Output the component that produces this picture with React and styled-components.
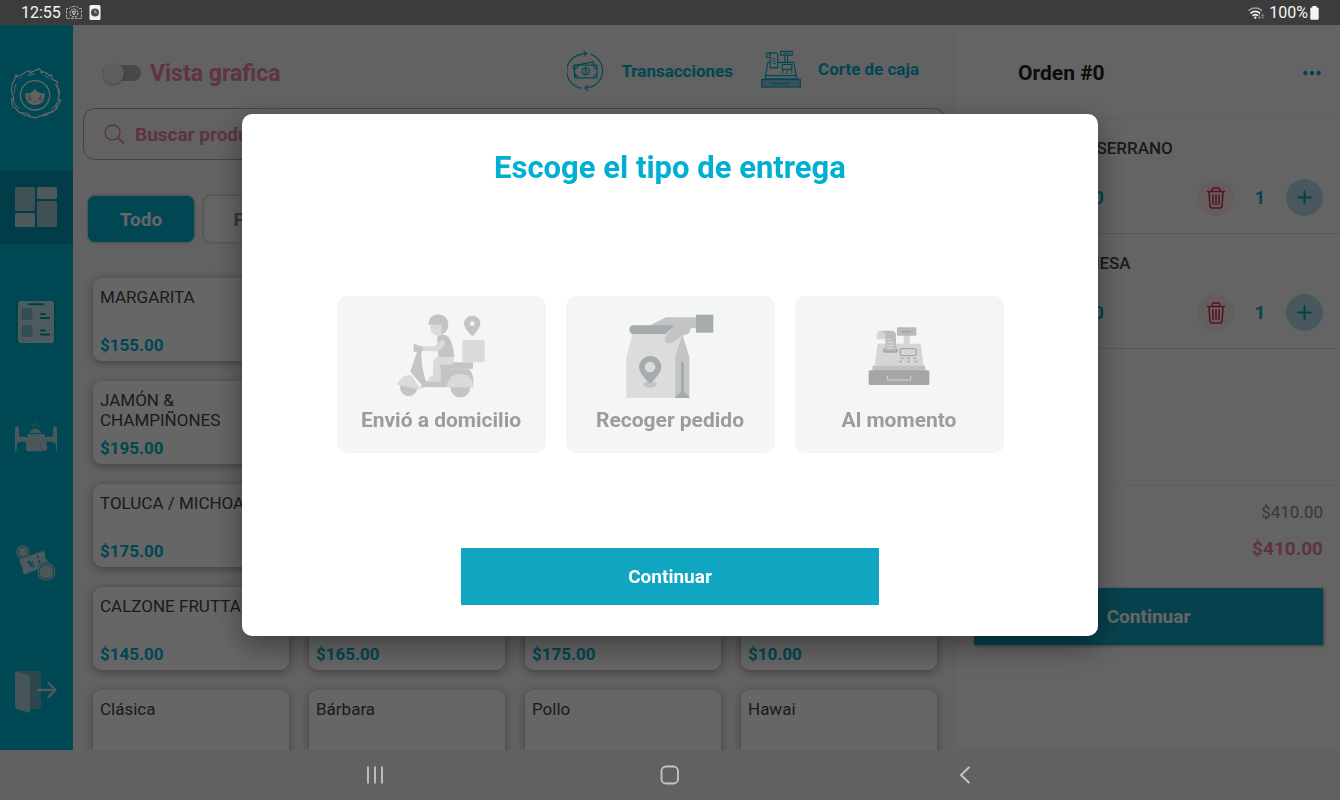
import React, { useState } from 'react';
import styled, { createGlobalStyle } from 'styled-components';

const GlobalStyle = createGlobalStyle`
  * {
    box-sizing: border-box;
  }

  body {
    margin: 0;
    font-family: Roboto, 'Liberation Sans', sans-serif;
    color: #444;
    background: #616161;
  }

  button,
  input {
    font: inherit;
    color: inherit;
    border: 0;
    padding: 0;
    margin: 0;
    background: none;
  }

  button {
    cursor: pointer;
  }

  svg {
    display: block;
    flex: none;
  }

  h1, h2, h3, p, ul {
    margin: 0;
    padding: 0;
    list-style: none;
  }
`;

// Screen
const Screen = styled.div`
  display: flex;
  flex-direction: column;
  height: 100vh;
  overflow: hidden;
`;

const StatusBar = styled.div`
  position: relative;
  z-index: 2;
  flex: none;
  display: flex;
  align-items: center;
  gap: 5px;
  height: 25px;
  padding: 0 21px;
  background: #3c3c3c;
  color: #f4f4f4;
  font-size: 16px;
  line-height: 24px;
`;

const StatusIcons = styled.div`
  display: flex;
  align-items: center;
  gap: 7px;
`;

const StatusRight = styled.div`
  display: flex;
  align-items: center;
  gap: ${({ $tight }) => ($tight ? '2px' : '4px')};
  margin-left: auto;
`;

const Body = styled.div`
  flex: 1;
  display: flex;
  min-height: 0;
`;

const NavBar = styled.nav`
  flex: none;
  display: grid;
  grid-template-columns: repeat(3, 22%);
  justify-content: center;
  justify-items: center;
  height: 50px;
  background: #616161;
`;

const NavKey = styled.button`
  display: flex;
  align-items: center;
  justify-content: center;
  width: 48px;
  color: #c6c6c6;
`;

// Sidebar
const Sidebar = styled.aside`
  flex: none;
  display: flex;
  flex-direction: column;
  width: 73px;
  padding-bottom: 21px;
  background: #00b4d2;
`;

const Logo = styled.div`
  display: flex;
  justify-content: center;
  height: 146px;
  padding: 42px 1px 0 0;
`;

const SideGroup = styled.div`
  display: flex;
  flex-direction: column;
  gap: ${({ $bottom }) => ($bottom ? '56px' : '42px')};
  margin-top: ${({ $bottom }) => ($bottom ? 'auto' : '0')};
`;

const SideButton = styled.button`
  display: flex;
  align-items: center;
  justify-content: center;
  height: 73px;
  padding: 0 1px 1px 0;
  background: ${({ $active }) => ($active ? '#0099b3' : 'transparent')};
`;

// Catalogue
const Main = styled.main`
  flex: 1;
  min-width: 0;
  background: #f4f4f4;
`;

const TopBar = styled.header`
  display: flex;
  align-items: flex-start;
  justify-content: space-between;
  height: 83px;
  padding: 25px 38px 0 30px;
`;

const ToggleLabel = styled.label`
  display: flex;
  align-items: center;
  gap: 9px;
  height: 46px;
  font-size: 23px;
  font-weight: 700;
  color: #ee7fab;
`;

const Toggle = styled.input`
  appearance: none;
  display: flex;
  align-items: center;
  width: 38px;
  height: 16px;
  border-radius: 8px;
  background: #b4b4b4;

  &::before {
    content: '';
    flex: none;
    width: 21px;
    height: 21px;
    border-radius: 50%;
    background: #ececec;
    box-shadow: 0 1px 2px rgba(0, 0, 0, 0.3);
  }

  &:checked {
    justify-content: flex-end;
  }
`;

const TopLinks = styled.div`
  display: flex;
  align-items: flex-start;
  gap: 28px;
`;

const TopLink = styled.a`
  display: flex;
  align-items: center;
  gap: 17px;
  color: #00b0cf;
  font-size: 17px;
  font-weight: 700;
  text-decoration: none;
`;

const SearchBox = styled.label`
  display: flex;
  align-items: center;
  gap: 10px;
  height: 52px;
  margin: 0 11px 0 10px;
  padding: 0 20px;
  border: 1px solid #a8a8a8;
  border-radius: 12px;
  color: #ee7fab;
`;

const SearchInput = styled.input`
  flex: 1;
  min-width: 0;
  font-size: 19px;
  font-weight: 700;

  &::placeholder {
    color: #ee7fab;
    opacity: 1;
  }
`;

const Chips = styled.div`
  display: flex;
  gap: 10px;
  padding: 36px 15px;
`;

const Chip = styled.button`
  width: 106px;
  height: 46px;
  border-radius: 7px;
  background: ${({ $active }) => ($active ? '#00b0cf' : '#fbfbfb')};
  color: ${({ $active }) => ($active ? '#fff' : '#8a8a8a')};
  box-shadow: 0 0 3px rgba(0, 0, 0, 0.4);
  font-size: 19px;
  font-weight: 700;
`;

const ProductGrid = styled.div`
  display: grid;
  grid-template-columns: repeat(4, 1fr);
  gap: 20px;
  padding: 0 20px;
`;

const ProductCard = styled.button`
  display: flex;
  flex-direction: column;
  justify-content: space-between;
  height: 83px;
  padding: 9px 7px 6px;
  border-radius: 9px;
  background: #fff;
  box-shadow: 0 2px 10px rgba(0, 0, 0, 0.35);
  text-align: left;
`;

const ProductName = styled.span`
  font-size: 17px;
  line-height: 20px;
`;

const ProductPrice = styled.span`
  font-size: 17px;
  line-height: 20px;
  font-weight: 700;
  color: #00b0cf;
`;

// Order
const OrderPanel = styled.section`
  flex: none;
  display: flex;
  flex-direction: column;
  width: 383px;
  background: #f9f9f9;
`;

const OrderHeader = styled.header`
  display: flex;
  align-items: center;
  justify-content: space-between;
  height: 94px;
  padding: 3px 18px 0 61px;
  border-bottom: 2px solid #f2f2f2;
`;

const OrderTitle = styled.h2`
  font-size: 21px;
  font-weight: 700;
  color: #222;
`;

const MoreButton = styled.button`
  color: #00b0cf;
`;

const OrderList = styled.ul`
  flex: 1;
`;

const OrderItem = styled.li`
  height: 115px;
  padding: 18px 17px 0 76px;
  border-bottom: 1px solid #dcdcdc;
`;

const ItemName = styled.h3`
  font-size: 17px;
  line-height: 22px;
  font-weight: 500;
`;

const ItemRow = styled.div`
  display: flex;
  align-items: center;
  gap: 19px;
  padding-top: 20px;
`;

const ItemPrice = styled.span`
  flex: 1;
  font-size: 19px;
  font-weight: 700;
  color: #00b0cf;
`;

const Quantity = styled.span`
  width: 14px;
  text-align: center;
  font-size: 19px;
  font-weight: 700;
  color: #00b0cf;
`;

const RoundButton = styled.button`
  display: flex;
  align-items: center;
  justify-content: center;
  width: 37px;
  height: 37px;
  border-radius: 50%;
  background: ${({ $danger }) => ($danger ? '#f9ebee' : '#b4dcea')};
  color: ${({ $danger }) => ($danger ? '#e0284f' : '#00a3c4')};
`;

const Totals = styled.div`
  display: flex;
  flex-direction: column;
  align-items: flex-end;
  gap: 14px;
  padding: 15px 17px 27px;
  border-top: 2px solid #f1f1f1;
`;

const Subtotal = styled.p`
  font-size: 17px;
  line-height: 22px;
  color: #8c8c8c;
`;

const Total = styled.p`
  font-size: 19px;
  line-height: 24px;
  font-weight: 700;
  color: #ee7fab;
`;

const PrimaryButton = styled.button`
  height: 57px;
  background: #10a5c1;
  color: #fff;
  font-size: 19px;
  font-weight: 700;
`;

const OrderButton = styled(PrimaryButton)`
  flex: none;
  margin: 0 17px 105px;
  box-shadow: 1px 1px 3px rgba(0, 0, 0, 0.4);
`;

// Modal
const Overlay = styled.div`
  position: fixed;
  inset: 0 0 50px;
  z-index: 1;
  display: flex;
  align-items: center;
  justify-content: center;
  background: rgba(0, 0, 0, 0.6);
`;

const Modal = styled.div`
  display: flex;
  flex-direction: column;
  align-items: center;
  width: min(856px, 92%);
  padding: 34px 24px 31px;
  border-radius: 10px;
  background: #fff;
  box-shadow: 0 10px 30px rgba(0, 0, 0, 0.4);
`;

const ModalTitle = styled.h1`
  font-size: 31px;
  line-height: 40px;
  font-weight: 700;
  color: #00b0d2;
`;

const Options = styled.div`
  display: flex;
  gap: 20px;
  padding: 108px 0 95px;
`;

const Option = styled.button`
  display: flex;
  flex-direction: column;
  align-items: center;
  gap: 10px;
  width: 209px;
  padding: 18px 0 21px;
  border-radius: 10px;
  background: #f4f6f6;
  color: #9c9c9c;
  font-size: 21px;
  line-height: 24px;
  font-weight: 700;
`;

const ModalButton = styled(PrimaryButton)`
  width: 418px;
  max-width: 100%;
`;

// Icons
const CameraIcon = () => (
  <svg width="16" height="13" viewBox="0 0 16 13" fill="none" stroke="#b8b8b8" strokeWidth=".9">
    <path d="M.5 4V2.500h3L5 .6h6l1.500 1.900h3v9.900H.5z" strokeDasharray="3 1" />
    <circle cx="8" cy="7" r="4" stroke="#e4e4e4" strokeDasharray="2 1" />
    <path d="M6.200 5.500q1.800-1 3.600 0L8 9z" stroke="#e4e4e4" />
  </svg>
);

const ClockPageIcon = () => (
  <svg width="12" height="15" viewBox="0 0 12 15">
    <rect x=".5" width="11" height="15" rx="1.5" fill="#f2f2f2" />
    <circle cx="6" cy="7.5" r="4" fill="#4a4a4a" />
    <path d="M6 5v2.700h2" fill="none" stroke="#bbb" />
  </svg>
);

const WifiIcon = () => (
  <svg width="17" height="14" viewBox="0 0 17 14" fill="none" strokeLinecap="round">
    <path d="M1 4.3a10 10 0 0 1 12.6 0" stroke="#9a9a9a" strokeWidth="1.6" />
    <path d="M3 7a7 7 0 0 1 8.6 0M5 9.4a4 4 0 0 1 4.6 0" stroke="#f4f4f4" strokeWidth="1.6" />
    <circle cx="7.3" cy="11.6" r="1.2" fill="#f4f4f4" />
    <path d="M11.5 8.5v4M10.3 11.4l1.2 1.2 1.2-1.2M14.8 12.5v-4M13.6 9.6l1.2-1.2L16 9.6" stroke="#8e8e8e" />
  </svg>
);

const BatteryIcon = () => (
  <svg width="9" height="14" viewBox="0 0 9 14" fill="#f4f4f4">
    <rect x="2.4" width="4.2" height="3" rx=".6" />
    <rect x=".3" y="1.5" width="8.4" height="12.3" rx="1.2" />
  </svg>
);

const RecentsIcon = () => (
  <svg width="18" height="18" viewBox="0 0 18 18" stroke="currentColor" strokeWidth="1.8">
    <path d="M2 .5v17M9 .5v17M16 .5v17" />
  </svg>
);

const HomeIcon = () => (
  <svg width="20" height="20" viewBox="0 0 20 20" fill="none" stroke="currentColor" strokeWidth="1.8">
    <rect x="1.5" y="1.5" width="16.5" height="17" rx="4.5" />
  </svg>
);

const BackIcon = () => (
  <svg width="12" height="18" viewBox="0 0 12 18" fill="none" stroke="currentColor" strokeWidth="1.9">
    <path d="M10.4 1L2 9l8.4 8" />
  </svg>
);

const LogoIcon = () => (
  <svg width="52" height="52" viewBox="8 22 156 156" fill="none" stroke="#fff" strokeWidth="3.800" strokeLinejoin="round" strokeLinecap="round">
    <path d="M97 27l6 14 3-6q14 5 22 14l5-3q-1 8 3 14 9 2 15 8-3 7-1 14 7 9 7 20-3 5-4 12-1 7 1 9 4-1 5-3-2 14-14 22l5 1q-8 12-24 17-8 8-21 8-14 2-17 6-18 1-25-6-15 0-20-8-14-3-18-15l-7-3q-6-10-5-24l5 3q2-7-1-13-7-11-4-24 1-15 9-23 0-9 5-16l2 8q8-8 18-10 9-8 22-10l-1 8q12-9 29-14z" />
    <path d="M26 74q-7 12-5 26M145 74q9 12 8 26M17 118q4 20 20 30M151 126q-5 14-20 24M40 158q18 0 30 10M130 158q-16 1-28 10M62 48q10-5 18-5M112 48q8 3 14 9M36 58q4-5 8-7" strokeWidth="3" />
    <circle cx="83" cy="107" r="44" />
    <path d="M54 101q20 1 29-14 9 15 29 14 1 34-29 35-30-1-29-35z" fill="#f4f4f4" stroke="none" />
    <path d="M62 113h11v10H62zM93 113h11v10H93z" fill="#eaa5b8" stroke="none" />
    <path d="M64 109h4M98 109h4M80 127q3 2 6 0" stroke="#36606a" strokeWidth="2" />
  </svg>
);

const DashboardIcon = () => (
  <svg width="42" height="40" viewBox="0 0 42 40">
    <rect width="20" height="24" rx="1.5" fill="#a0cbd8" />
    <rect x="22" width="20" height="12" rx="1.5" fill="#c4dee6" />
    <rect x="22" y="14" width="20" height="26" rx="1.5" fill="#a0cbd8" />
    <rect y="26" width="20" height="14" rx="1.5" fill="#c4dee6" />
  </svg>
);

const MenuBoardIcon = () => (
  <svg width="42" height="42" viewBox="0 0 42 42">
    <rect x=".5" width="41" height="42" rx="1" fill="#00a4be" />
    <rect x="3" width="36" height="42" rx="2.5" fill="#c1e2ea" />
    <path d="M14 3.3h14M26 13h4M26 17h8M26 29.500h4M26 33.500h8" stroke="#0097b0" strokeWidth="2" strokeLinecap="round" />
    <rect x="6.500" y="7" width="11" height="12" rx="2" fill="#7fc0d2" />
    <rect x="6.500" y="24" width="11" height="12" rx="2" fill="#7fc0d2" />
  </svg>
);

const TableIcon = () => (
  <svg width="42" height="30" viewBox="45 487 123 88" fill="#b9dde6">
    <path d="M45 502q6-4 11 0l2 28h18q4 2 4 6v12l3-1-2 8h-4v-10H60l-9 4-2 24h-4z" />
    <path d="M168 502q-6-4-11 0l-2 28h-18q-4 2-4 6v12l-3-1 2 8h4v-10h19l9 4 2 24h4z" />
    <path d="M88 519q4-10 14-11v-3h5v3q11 1 15 11z" />
    <path d="M82 522h49q4 20 9 42l-3 6q-6 4-10 0-5 6-11 1-6 5-11 0-6 6-12 0-7 5-12 0l-4-3q1-23 5-46z" />
    <path d="M96 494v6M104 488v10M112 494v6" stroke="#b9dde6" strokeWidth="2.500" />
    <path d="M84 526h45M92 542v26M106 542v28M120 542v26" stroke="#9fcfda" strokeWidth="2" />
  </svg>
);

const CouponIcon = () => (
  <svg width="42" height="38" viewBox="45 130 126 114">
    <circle cx="69" cy="154" r="20" fill="#b9dde6" />
    <circle cx="69" cy="154" r="15" fill="none" stroke="#0097b0" strokeWidth="2.500" />
    <path d="M56 176l76-27 5 14q-5 8 3 11l10 18-78 31-6-13q5-8-3-14z" fill="#c1e2ea" stroke="#00b4d2" strokeWidth="2" />
    <path d="M112 162l12 40" stroke="#0097b0" strokeWidth="3" strokeDasharray="12 4" />
    <circle cx="87" cy="185" r="4" fill="none" stroke="#0097b0" strokeWidth="3" />
    <circle cx="98" cy="195" r="4" fill="none" stroke="#0097b0" strokeWidth="3" />
    <path d="M99 181l-12 19" stroke="#0097b0" strokeWidth="3" />
    <circle cx="139" cy="213" r="28" fill="#b9dde6" stroke="#00b4d2" strokeWidth="2" />
    <circle cx="139" cy="213" r="22" fill="#b9dde6" stroke="#0097b0" strokeWidth="2.500" />
  </svg>
);

const ExitIcon = () => (
  <svg width="42" height="42" viewBox="0 0 42 42">
    <path d="M1 0h22q3 0 3 3v32q0 3-3 3H13V6z" fill="#6fb1c3" />
    <path d="M0 2q0-2 2-1l11 3q2 1 2 3v35L2 38q-2-1-2-3z" fill="#b1d3dc" />
    <path d="M23 19h17M33.500 12l7 7-7 7" fill="none" stroke="#c4e0e7" strokeWidth="2.400" strokeLinecap="round" strokeLinejoin="round" />
  </svg>
);

const TransactionsIcon = () => (
  <svg width="37" height="42" viewBox="78 60 110 128" fill="none" stroke="#00b0cf" strokeWidth="3.500">
    <path d="M120 176A52 52 0 0 1 116 74q10-4 20-3M147 73a52 52 0 0 1 1 100q-8 3-16 3" />
    <path d="M127 63l10 8-10 9M141 167l-10 9 10 9" />
    <path d="M94 108l62-12 3 9" />
    <rect x="100" y="106" width="68" height="39" />
    <path d="M100 117q9-1 11-11M157 106q2 10 11 11M100 134q9 1 11 11M157 145q2-10 11-11M96 107l6 36" />
    <circle cx="134" cy="125" r="11" />
    <path d="M138 120q-4-3-7 0t3 5 3 5-7 0M134 116v18" strokeWidth="2.500" />
  </svg>
);

const RegisterLineIcon = () => (
  <svg width="40" height="38" viewBox="668 58 122 114" fill="none" stroke="#00b0cf" strokeWidth="3.500">
    <rect x="670" y="147" width="118" height="23" fill="#8cc9d8" />
    <path d="M707 153v7h45v-7" />
    <path d="M680 145l2-10h94l2 10zM682 134l7-39h6M720 95h48l7 39" />
    <path d="M685 80v-8q0-6 7-6h22q5 0 5 6v39h-23V80zM696 80v-7q-1-6-6-6" />
    <path d="M703 84h8M703 91h10M703 98h10M694 111h28" strokeWidth="2.500" />
    <rect x="728" y="61" width="35" height="12" />
    <path d="M736 67h20M741 74v20M749 74v20" />
    <rect x="733" y="101" width="29" height="15" />
    <path d="M732 121h6M744 121h6M757 121h6M730 128h6M744 128h6M758 128h6" strokeWidth="3" />
  </svg>
);

const SearchIcon = () => (
  <svg width="21" height="21" viewBox="0 0 21 21" fill="none" stroke="currentColor" strokeWidth="1.300">
    <circle cx="8.500" cy="8.500" r="7.500" />
    <path d="M14 14l6 5.500" strokeWidth="1.800" />
  </svg>
);

const DotsIcon = () => (
  <svg width="20" height="6" viewBox="0 0 20 6" fill="currentColor">
    <circle cx="3.300" cy="3" r="2.200" />
    <circle cx="10" cy="3" r="2.200" />
    <circle cx="16.700" cy="3" r="2.200" />
  </svg>
);

const TrashIcon = () => (
  <svg width="18" height="22" viewBox="0 0 18 22" fill="none" stroke="currentColor" strokeWidth="1.500">
    <path d="M0 4.500h18M5.300 4V2.300q0-1.300 1.300-1.300h4.800q1.300 0 1.300 1.300V4M2 5l.9 13.700Q3 21 5 21h8q2 0 2.100-2.300L16 5" />
    <path d="M5.800 7.500l.3 10.500M9 7.500V18M12.200 7.500L11.900 18" />
  </svg>
);

const PlusIcon = () => (
  <svg width="15" height="15" viewBox="0 0 15 15" stroke="currentColor" strokeWidth="2" strokeLinecap="round">
    <path d="M7.500 1.200v12.600M1.200 7.500h12.600" />
  </svg>
);

const ScooterIcon = () => (
  <svg width="88" height="84" viewBox="197 73 264 252">
    <circle cx="232" cy="293" r="26" fill="#c2c4c5" />
    <circle cx="387" cy="293" r="30" fill="#c2c4c5" />
    <path d="M247 162l28 9v13h-5q-1 48 14 91h48l18-36 60-4q14 14 16 32v26h-80l-69-1-40-46 20-60h-10z" fill="#c2c4c5" />
    <path d="M275 277l10 15-17 2z" fill="#c2c4c5" />
    <path d="M197 285q9-23 34-29 6-1 11 4 13 20 27 40z" fill="#d9dada" />
    <path d="M347 293q3-40 40-41 36 1 39 41z" fill="#d9dada" />
    <path d="M327 218h98v14q0 6-6 6H321z" fill="#c2c4c5" />
    <path d="M327 238h94" stroke="#d9dada" strokeWidth="2" />
    <path d="M327 236v40h16l12-38z" fill="#c2c4c5" />
    <path d="M315 202h52v14q-2 8-11 9h-29v50h-37q2-15 15-18v-34q0-13 10-21z" fill="#d9dada" />
    <path d="M318 139q16-10 34 3 14 22 17 60h-47l-4-25z" fill="#c2c4c5" />
    <path d="M275 170h34l18-17q7-3 12 2 5 6 1 12l-15 15q-3 3-7 3h-43z" fill="#d9dada" />
    <path d="M297 104h33v33q-15 3-24-4-9-8-9-19z" fill="#d9dada" />
    <path d="M291 105q1-30 31-31 29 2 29 32 0 20-21 29v-30z" fill="#c2c4c5" />
    <path d="M423 78a24 24 0 0 1 24 24q0 14-24 38-25-24-25-38a24 24 0 0 1 25-24z" fill="#c2c4c5" />
    <circle cx="423" cy="102" r="7" fill="#f4f6f6" />
    <rect x="393" y="150" width="67" height="68" rx="7" fill="#d9dada" />
  </svg>
);

const BagIcon = () => (
  <svg width="88" height="84" viewBox="197 73 264 252">
    <path d="M218 128h150v197H198V202z" fill="#dbdcdc" />
    <path d="M366 134l21 68v123h-42V202z" fill="#c2c4c5" />
    <path d="M345 325v-4l17-14v-89h9v89l16 14v4z" fill="#a7abae" />
    <ellipse cx="269" cy="284" rx="20" ry="10" fill="#c2c4c5" />
    <path d="M269 199a34 34 0 0 1 34 34q0 19-34 49-33-30-33-49a34 34 0 0 1 33-34z" fill="#a7abae" />
    <circle cx="269" cy="232" r="16" fill="#dbdcdc" />
    <path d="M267 108l50-25h92v33h-18q-1 21-24 21l-32 23q-12 5-19-4-6-9 1-17l15-20z" fill="#c2c4c5" />
    <path d="M219 107h124l-27 26h-97q-12-1-12-13t12-13z" fill="#a7abae" />
    <rect x="407" y="75" width="52" height="54" fill="#a7abae" />
  </svg>
);

const RegisterIcon = () => (
  <svg width="88" height="84" viewBox="197 73 264 252">
    <rect x="343" y="135" width="18" height="30" fill="#d4d5d5" />
    <path d="M268 162h121q5 0 6 5l8 62H256l8-62q1-5 4-5z" fill="#d4d5d5" />
    <rect x="249" y="228" width="159" height="18" rx="4" fill="#c0c0c0" />
    <rect x="238" y="242" width="182" height="44" rx="4" fill="#a6a6a6" />
    <path d="M294 259v12h70v-12" fill="none" stroke="#d4d5d5" strokeWidth="3" />
    <rect x="323" y="113" width="58" height="25" rx="4" fill="#b9b9b9" />
    <path d="M338 126h27" stroke="#9f9f9f" strokeWidth="4" />
    <rect x="281" y="176" width="45" height="13" rx="6" fill="#a6a6a6" />
    <path d="M273 123h34q13 1 13 14v46h-32v-38q0-13-15-22z" fill="#bcbcbc" />
    <path d="M262 149v-13q1-13 13-13 12 2 13 14v12z" fill="#d4d5d5" />
    <path d="M292 149h13M292 158h21M292 167h21M292 175h21" stroke="#dedede" strokeWidth="3" />
    <rect x="333" y="177" width="47" height="21" rx="5" fill="#d4d5d5" stroke="#a6a6a6" strokeWidth="4" />
    <path d="M334 206h9M353 206h9M372 206h9M329 216h9M353 216h9M376 216h9" stroke="#a6a6a6" strokeWidth="4" />
  </svg>
);

// Data
const PRODUCTS = [
  { name: 'MARGARITA', price: '$155.00' },
  {}, {}, {},
  { name: 'JAMÓN & CHAMPIÑONES', price: '$195.00' },
  {}, {}, {},
  { name: 'TOLUCA / MICHOACAN', price: '$175.00' },
  {}, {}, {},
  { name: 'CALZONE FRUTTA', price: '$145.00' },
  { price: '$165.00' },
  { price: '$175.00' },
  { price: '$10.00' },
  { name: 'Clásica' },
  { name: 'Bárbara' },
  { name: 'Pollo' },
  { name: 'Hawai' },
];

const ORDER_ITEMS = [
  { name: 'JAMÓN SERRANO', price: '$205.00', quantity: 1 },
  { name: 'BOLOGNESA', price: '$205.00', quantity: 1 },
];

const DELIVERY_TYPES = [
  { id: 'delivery', label: 'Envió a domicilio', Icon: ScooterIcon },
  { id: 'pickup', label: 'Recoger pedido', Icon: BagIcon },
  { id: 'now', label: 'Al momento', Icon: RegisterIcon },
];

const App = () => {
  const [graphicView, setGraphicView] = useState(false);
  const [query, setQuery] = useState('');

  return (
    <>
      <GlobalStyle />
      <Screen>
        <StatusBar>
          <span>12:55</span>
          <StatusIcons>
            <CameraIcon />
            <ClockPageIcon />
          </StatusIcons>
          <StatusRight>
            <WifiIcon />
            <StatusRight $tight>
              <span>100%</span>
              <BatteryIcon />
            </StatusRight>
          </StatusRight>
        </StatusBar>

        <Body>
          <Sidebar>
            <Logo><LogoIcon /></Logo>
            <SideGroup>
              <SideButton $active aria-label="Productos"><DashboardIcon /></SideButton>
              <SideButton aria-label="Pedidos"><MenuBoardIcon /></SideButton>
              <SideButton aria-label="Mesas"><TableIcon /></SideButton>
            </SideGroup>
            <SideGroup $bottom>
              <SideButton aria-label="Cupones"><CouponIcon /></SideButton>
              <SideButton aria-label="Salir"><ExitIcon /></SideButton>
            </SideGroup>
          </Sidebar>

          <Main>
            <TopBar>
              <ToggleLabel>
                <Toggle
                  type="checkbox"
                  checked={graphicView}
                  onChange={(e) => setGraphicView(e.target.checked)}
                />
                Vista grafica
              </ToggleLabel>
              <TopLinks>
                <TopLink href="#transacciones"><TransactionsIcon />Transacciones</TopLink>
                <TopLink href="#corte"><RegisterLineIcon />Corte de caja</TopLink>
              </TopLinks>
            </TopBar>
            <SearchBox>
              <SearchIcon />
              <SearchInput
                type="text"
                aria-label="Buscar producto"
                placeholder="Buscar producto"
                value={query}
                onChange={(e) => setQuery(e.target.value)}
              />
            </SearchBox>
            <Chips>
              <Chip $active>Todo</Chip>
              <Chip>Pizza</Chip>
            </Chips>
            <ProductGrid>
              {PRODUCTS.map(({ name, price }, idx) => (
                <ProductCard key={idx}>
                  <ProductName>{name}</ProductName>
                  <ProductPrice>{price}</ProductPrice>
                </ProductCard>
              ))}
            </ProductGrid>
          </Main>

          <OrderPanel>
            <OrderHeader>
              <OrderTitle>Orden #0</OrderTitle>
              <MoreButton aria-label="Más opciones"><DotsIcon /></MoreButton>
            </OrderHeader>
            <OrderList>
              {ORDER_ITEMS.map(({ name, price, quantity }) => (
                <OrderItem key={name}>
                  <ItemName>{name}</ItemName>
                  <ItemRow>
                    <ItemPrice>{price}</ItemPrice>
                    <RoundButton $danger aria-label="Eliminar"><TrashIcon /></RoundButton>
                    <Quantity>{quantity}</Quantity>
                    <RoundButton aria-label="Agregar"><PlusIcon /></RoundButton>
                  </ItemRow>
                </OrderItem>
              ))}
            </OrderList>
            <Totals>
              <Subtotal>$410.00</Subtotal>
              <Total>$410.00</Total>
            </Totals>
            <OrderButton>Continuar</OrderButton>
          </OrderPanel>
        </Body>

        <Overlay>
          <Modal role="dialog" aria-modal="true" aria-labelledby="delivery-title">
            <ModalTitle id="delivery-title">Escoge el tipo de entrega</ModalTitle>
            <Options>
              {DELIVERY_TYPES.map(({ id, label, Icon }) => (
                <Option key={id}>
                  <Icon />
                  {label}
                </Option>
              ))}
            </Options>
            <ModalButton>Continuar</ModalButton>
          </Modal>
        </Overlay>

        <NavBar>
          <NavKey aria-label="Recientes"><RecentsIcon /></NavKey>
          <NavKey aria-label="Inicio"><HomeIcon /></NavKey>
          <NavKey aria-label="Atrás"><BackIcon /></NavKey>
        </NavBar>
      </Screen>
    </>
  );
};

export default App;
